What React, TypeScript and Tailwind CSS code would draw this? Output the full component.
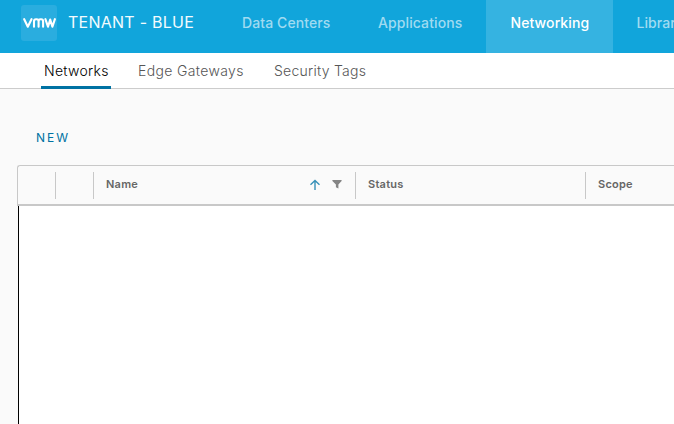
type NavItem = { label: string; active?: boolean; box: string; text: string };

const mainNav: NavItem[] = [
  { label: "Data Centers", box: "w-[136px]", text: "tracking-[0.1px]" },
  { label: "Applications", box: "w-[132px]", text: "tracking-[0.1px]" },
  { label: "Networking", active: true, box: "w-[127px]", text: "ml-[0.5px] tracking-[0.1px]" },
  { label: "Libraries", box: "w-[110px]", text: "-ml-[0.5px] tracking-[0.08px]" },
];

const subNav: NavItem[] = [
  { label: "Networks", active: true, box: "w-[70px]", text: "tracking-[0.28px]" },
  { label: "Edge Gateways", box: "w-[112px]", text: "tracking-[0.35px]" },
  { label: "Security Tags", box: "w-[98px]", text: "tracking-[0.25px]" },
];

function Logo() {
  return (
    <div className="mt-[5px] flex h-9 w-9 shrink-0 items-center justify-center rounded-[3px] bg-[#2aaddf]">
      <svg width="33" height="10" viewBox="0 0 33 10" fill="none" stroke="white" strokeWidth="2.1" strokeLinecap="round" strokeLinejoin="round" aria-label="vmw">
        <path d="M1.2 1.2 4.8 8.7 8.5 1.2" />
        <path d="M11 8.7V3.4Q11 1.3 13 1.3H13.7Q15.6 1.3 15.6 3.4V8.7M15.6 3.4Q15.6 1.3 17.5 1.3H18.2Q20.1 1.3 20.1 3.4V8.7" />
        <path d="M22.4 1.2 25 8.7 27.2 1.6 29.4 8.7 31.9 1.2" />
      </svg>
    </div>
  );
}

function Divider() {
  return <div className="h-[27px] w-px shrink-0 bg-[#c8c8c8]" />;
}

export default function App() {
  return (
    <div className="flex h-[424px] w-[674px] flex-col overflow-hidden bg-[#fafafa] font-['Inter',sans-serif]">
      <header className="flex h-[53px] shrink-0 bg-[#11a5db] pl-[21px]">
        <Logo />
        <div className="ml-[11px] w-[150px] shrink-0 whitespace-nowrap pt-[10px] text-[16px] leading-6 tracking-[0.25px] text-[#f3fbfe]">TENANT - BLUE</div>
        <nav className="flex">
          {mainNav.map((item) => (
            <div key={item.label} className={`${item.box} shrink-0 whitespace-nowrap pl-6 pt-[13px] text-[14px] leading-5 font-medium ${item.active ? "bg-[#35b3e1] text-white" : "text-[#a0dbf1]"}`}>
              <span className={item.text}>{item.label}</span>
            </div>
          ))}
        </nav>
      </header>
      <nav className="flex h-9 shrink-0 gap-6 border-b border-[#cccccc] bg-white pl-[41px]">
        {subNav.map((item) => (
          <div key={item.label} className={`${item.box} h-9 shrink-0 whitespace-nowrap pl-[3px] pt-2 text-[14px] leading-5 font-light ${item.active ? "border-b-[3px] border-[#0072a3] text-black" : "text-[#565656]"}`}>
            <span className={item.text}>{item.label}</span>
          </div>
        ))}
      </nav>
      <main className="flex grow flex-col pl-[17px]">
        <div className="h-[76px] shrink-0 pl-[19px] pt-[39px]">
          <button className="block text-[12px] leading-5 tracking-[2px] text-[#0072a3]">NEW</button>
        </div>
        <div className="flex h-[41px] w-[700px] shrink-0 rounded-tl-[3px] border-t border-l border-b-2 border-[#c8c8c8] pt-[6px] text-[11px] leading-[25px] font-semibold tracking-[0.25px] text-[#666666]">
          <div className="w-[37px] shrink-0" />
          <Divider />
          <div className="w-[37px] shrink-0" />
          <Divider />
          <div className="flex w-[261px] shrink-0 pl-3">
            <span className="grow">Name</span>
            <svg className="mt-[7px] mr-[11px]" width="12" height="12" viewBox="0 0 12 12" fill="none" stroke="#3791b8" strokeWidth="1.4">
              <path d="M6 11V1.7M1.5 5.8 6 1.5 10.5 5.8" />
            </svg>
            <svg className="mt-[8px] mr-[13px]" width="10" height="9" viewBox="0 0 10 9" fill="#858585">
              <path d="M.4 0H9.6V1L6.4 4.5V8.6L3.9 7.3V4.5L.4 1Z" />
            </svg>
          </div>
          <Divider />
          <div className="w-[229px] shrink-0 pl-3">Status</div>
          <Divider />
          <div className="pl-3">Scope</div>
        </div>
        <div className="ml-px grow border-l border-black bg-white" />
      </main>
    </div>
  );
}
